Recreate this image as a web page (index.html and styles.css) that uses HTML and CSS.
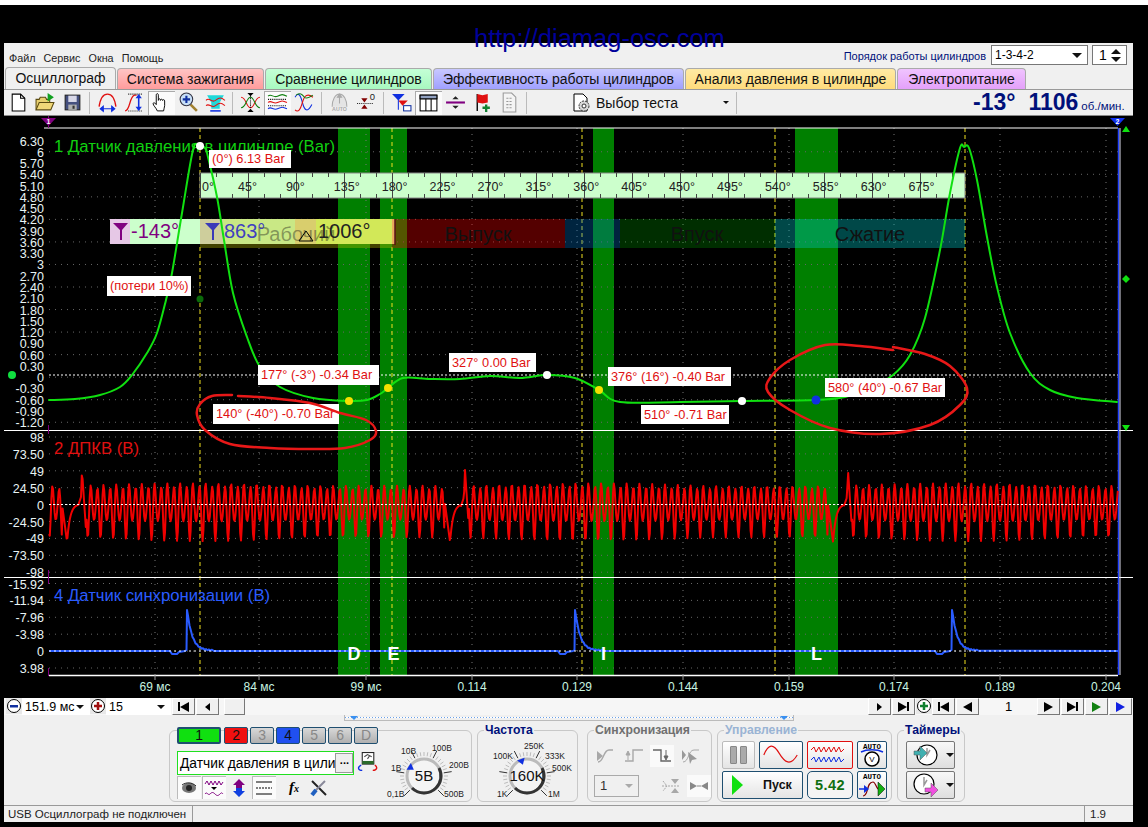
FILE: index.html
```html
<!DOCTYPE html>
<html lang="ru">
<head>
  <meta charset="UTF-8" />
  <title>Осциллограф</title>
  <link rel="stylesheet" href="styles.css">
</head>
<body>
  <div class="top-white"></div>
  <div class="site-url">http://diamag-osc.com</div>

  <div class="window">
    <div class="menu-row">
      <div class="menu">
        <span>Файл</span><span>Сервис</span><span>Окна</span><span>Помощь</span>
      </div>
      <div class="order">
        <span class="order-label">Порядок работы цилиндров</span>
        <div class="order-combo">1-3-4-2<i class="arrow-down"></i></div>
        <div class="order-spin">1<span class="spin-arrows"><i class="arrow-up"></i><i class="arrow-down"></i></span></div>
      </div>
    </div>

    <div class="tabs">
      <div class="tab tab-active">Осциллограф</div>
      <div class="tab tab-red">Система зажигания</div>
      <div class="tab tab-green">Сравнение цилиндров</div>
      <div class="tab tab-blue">Эффективность работы цилиндров</div>
      <div class="tab tab-yellow">Анализ давления в цилиндре</div>
      <div class="tab tab-purple">Электропитание</div>
    </div>

    <div class="toolbar">
      <button class="tb"><svg viewBox="0 0 20 20"><path d="M4 2h8l4 4v12H4z" fill="#fff" stroke="#000"/><path d="M12 2v4h4" fill="none" stroke="#000"/></svg></button>
      <button class="tb"><svg viewBox="0 0 20 20"><path d="M1 17V7h3l1-2h5l1 2h3v3" fill="#e8d070" stroke="#5a4a10"/><path d="M1 17l3-7h14l-3 7z" fill="#f0d878" stroke="#5a4a10"/><path d="M12 1l6 4-6 4z" fill="#10a020"/></svg></button>
      <button class="tb"><svg viewBox="0 0 20 20"><rect x="3" y="3" width="14" height="14" fill="#45507f" stroke="#222"/><rect x="6" y="3.500" width="8" height="6" fill="#d8d8e8"/><rect x="6" y="12" width="8" height="5" fill="#b0b0b0"/><rect x="10" y="13" width="2" height="3" fill="#333"/></svg></button>
      <i class="tb-sep"></i>
      <button class="tb"><svg viewBox="0 0 20 20"><path d="M2 14C3 7 6 2 10 2s7 5 8 12" fill="none" stroke="#e01010" stroke-width="1.300"/><path d="M3 16h14M3 16l3-2.500v5zM17 16l-3-2.500v5z" fill="#1030e0" stroke="#1030e0"/></svg></button>
      <button class="tb"><svg viewBox="0 0 20 20"><path d="M1 18c5 0 4-14 9-15h2" fill="none" stroke="#e01010" stroke-width="1.200"/><path d="M4 2h14M4 18h14" stroke="#222" stroke-dasharray="1 1"/><path d="M14 3v14" stroke="#1030e0" stroke-width="1.500"/><path d="M14 2l-3 4h6zM14 18l-3-4h6z" fill="#1030e0"/></svg></button>
      <button class="tb tb-on"><svg viewBox="0 0 20 20"><path d="M6 18c-1-3-4-5-4-7 0-1 2-1 3 1V3c0-2 2-2 2 0v5c0-2 2-2 2 0 0-1.500 2-1.500 2 0 0-1 2-1 2 .5V13c0 2-1 3-1 5z" fill="#fff" stroke="#000" stroke-width=".9"/></svg></button>
      <button class="tb"><svg viewBox="0 0 20 20"><path d="M12 12l6 6" stroke="#a08030" stroke-width="2.500"/><circle cx="8" cy="7" r="6" fill="#c8e0f8" stroke="#334"/><path d="M4.500 7h7M8 3.500v7" stroke="#1030a0" stroke-width="2"/></svg></button>
      <button class="tb"><svg viewBox="0 0 20 20"><path d="M2 3h16l-4 7v6H6v-6z" fill="#20d8d8"/><path d="M1 8c3-4 5 3 9 0s5-3 9 0M1 13c3-3 5 3 9 0s5-3 9 0" fill="none" stroke="#e01010"/><path d="M5 18h10" stroke="#1030e0" stroke-width="1.500"/></svg></button>
      <i class="tb-sep"></i>
      <button class="tb"><svg viewBox="0 0 20 20"><path d="M1 5c5 0 5 10 9 10s4-10 9-10" fill="none" stroke="#e01010"/><path d="M1 15c5 0 5-10 9-10s4 10 9 10" fill="none" stroke="#108010"/><path d="M10 4v12" stroke="#000" stroke-dasharray="1 1"/><path d="M7 1h6l-3 3zM7 19h6l-3-3z" fill="#000"/></svg></button>
      <button class="tb tb-on"><svg viewBox="0 0 20 20"><path d="M1 4c3-3 5 2 9 0s5-2 9 0" fill="none" stroke="#108010"/><path d="M1 10c3-3 5 2 9 0s5-2 9 0" fill="none" stroke="#e01010"/><path d="M1 16c3-3 5 2 9 0s5-2 9 0" fill="none" stroke="#1030e0"/><path d="M1 7h18M1 13h18" stroke="#000" stroke-dasharray="1 1"/></svg></button>
      <button class="tb"><svg viewBox="0 0 20 20"><path d="M1 5c3-5 5-3 7 5s5 10 9 2" fill="none" stroke="#1030e0"/><path d="M1 17c3 3 5 0 7-7s5-9 10-5" fill="none" stroke="#e01010"/><path d="M2 3c5-3 6 0 8 2s5 0 8-2" fill="none" stroke="#108010"/></svg></button>
      <i class="tb-sep"></i>
      <button class="tb"><svg viewBox="0 0 20 20"><path d="M3 14C3 7 6 2 10 2s7 5 7 12" fill="#e4e4e4" stroke="#aaa"/><path d="M10 3v8M8 5l2-3 2 3z" stroke="#aaa" fill="#aaa"/><text x="10" y="18.500" class="tb-auto">AUTO</text></svg></button>
      <button class="tb"><svg viewBox="0 0 20 20"><path d="M5 6h6l-3 4zM5 16h6l-3-4z" fill="#800000"/><path d="M1 11h15" stroke="#222" stroke-dasharray="1 1"/><text x="13" y="8" class="tb-zero">0</text></svg></button>
      <i class="tb-sep"></i>
      <button class="tb"><svg viewBox="0 0 20 20"><path d="M1 2h12l-6 6z" fill="#1030e0"/><path d="M7 8h9l-5 5z" fill="#e01010"/><path d="M7 3v14" stroke="#1030e0"/><rect x="12" y="13" width="7" height="5" fill="#fff" stroke="#1030a0"/></svg></button>
      <button class="tb tb-on"><svg viewBox="0 0 20 20"><rect x="2" y="3" width="16" height="15" fill="#fff" stroke="#000"/><path d="M2 6.500h16M7.500 3v15M12.500 3v15" stroke="#000"/><rect x="2" y="3" width="16" height="3.500" fill="#90a0c0" stroke="#000"/></svg></button>
      <button class="tb"><svg viewBox="0 0 20 20"><path d="M1 10h18" stroke="#800080" stroke-width="2"/><path d="M7 7h6l-3-3zM7 13h6l-3 3z" fill="#222"/></svg></button>
      <button class="tb"><svg viewBox="0 0 20 20"><path d="M5 2v16" stroke="#000" stroke-width="1.300"/><path d="M5 2l5 1 5-1v8l-5 1-5-1z" fill="#e01010"/><path d="M10 15h7M13.500 12v7" stroke="#108030" stroke-width="2.200"/></svg></button>
      <button class="tb"><svg viewBox="0 0 20 20"><path d="M4 1h8l4 4v14H4z" fill="#f4f4f4" stroke="#999"/><path d="M7 6h6M7 9h6M7 12h6M7 15h6" stroke="#999" stroke-dasharray="2 1"/></svg></button>
      <i class="tb-sep"></i>
      <div class="test-select">
        <svg viewBox="0 0 20 20"><path d="M3 1h9l4 4v13H3z" fill="#fff" stroke="#000"/><circle cx="13" cy="13" r="5" fill="#d8d8d8" stroke="#333" stroke-dasharray="2 1"/><circle cx="13" cy="13" r="2" fill="#fff" stroke="#333"/></svg>
        <span>Выбор теста</span>
        <i class="arrow-small"></i>
      </div>
      <i class="tb-sep tb-sep-test"></i>
      <div class="rpm">
        <span class="rpm-deg">-13°</span><span class="rpm-val">1106</span><span class="rpm-unit">об./мин.</span>
      </div>
    </div>

    <svg id="chart" class="chart" viewBox="4 116 1129 582"></svg>

    <div class="nav-row">
      <div class="nav-left">
        <button class="round-btn"><svg viewBox="0 0 16 16"><circle cx="8" cy="8" r="6.500" fill="#fff" stroke="#000"/><rect x="4" y="7" width="8" height="2.500" fill="#1030a0"/></svg></button>
        <div class="nav-combo nav-combo-time">151.9 мс<i class="arrow-down"></i></div>
        <button class="round-btn"><svg viewBox="0 0 16 16"><circle cx="8" cy="8" r="6.500" fill="#fff" stroke="#000"/><path d="M4 8h8M8 4v8" stroke="#a01010" stroke-width="2.500"/></svg></button>
        <div class="nav-combo nav-combo-step">15<i class="arrow-down"></i></div>
        <button class="step-btn"><i class="bar"></i><i class="tri-l"></i></button>
        <button class="step-btn"><i class="tri-l tri-small"></i></button>
        <button class="step-btn step-blank"></button>
      </div>
      <div class="nav-right">
        <button class="step-btn"><i class="tri-r tri-small"></i></button>
        <button class="step-btn"><i class="tri-r"></i><i class="bar"></i></button>
        <button class="round-btn"><svg viewBox="0 0 16 16"><circle cx="8" cy="8" r="6.500" fill="#fff" stroke="#000"/><path d="M4 8h8M8 4v8" stroke="#108030" stroke-width="2.500"/></svg></button>
        <button class="step-btn"><i class="bar"></i><i class="tri-l"></i></button>
        <button class="step-btn"><i class="tri-l"></i></button>
        <span class="page-num">1</span>
        <button class="step-btn"><i class="tri-r"></i></button>
        <button class="step-btn"><i class="tri-r"></i><i class="bar"></i></button>
        <button class="step-btn"><i class="tri-r tri-green"></i></button>
        <button class="step-btn"><i class="tri-r tri-blue"></i></button>
      </div>
    </div>

    <div class="panel">
      <div class="scroll-strip"><i class="scroll-mark"></i><i class="scroll-mark scroll-mark-r"></i></div>
      <div class="groups">

        <div class="group group-channels">
          <div class="chan-col">
            <div class="chan-row">
              <div class="chan chan-1">1</div>
              <div class="chan chan-2">2</div>
              <div class="chan chan-off">3</div>
              <div class="chan chan-4">4</div>
              <div class="chan chan-off">5</div>
              <div class="chan chan-off">6</div>
              <div class="chan chan-off">D</div>
            </div>
            <div class="sensor-row">
              <div class="sensor">
                <span class="sensor-name">Датчик давления в цили</span>
                <span class="sensor-more">...</span>
              </div>
              <svg class="sensor-ic" viewBox="0 0 20 20"><rect x="5" y="1" width="11" height="11" fill="#fff" stroke="#222"/><path d="M7 5l3-2 4 2M10 7l2-3" stroke="#444" fill="none"/><rect x="5" y="9" width="11" height="3" fill="#2a6a2a"/><path d="M4 13c-4 2-3 5 1 5" fill="none" stroke="#1030e0" stroke-width="1.300"/><path d="M17 13c3 2 2 5-2 5" fill="none" stroke="#e01010" stroke-width="1.300"/></svg>
            </div>
            <div class="tool-row">
              <button class="tool tool-on"><svg viewBox="0 0 20 20"><ellipse cx="10" cy="10" rx="7" ry="5" fill="#777"/><circle cx="10" cy="10" r="3" fill="#222"/><path d="M3 7c4-3 10-3 14 1" stroke="#222" fill="none"/></svg></button>
              <button class="tool tool-on"><svg viewBox="0 0 20 20"><path d="M1 6l2-3 2 4 2-4 2 4 2-4 2 4 2-4 2 4 2-3" fill="none" stroke="#800080"/><path d="M1 16c2-3 3 2 5 0s3-2 5 0 3 2 5 0 2-1 3 0" fill="none" stroke="#800080"/><path d="M7 9h6l-3 3z" fill="#000"/></svg></button>
              <button class="tool"><svg viewBox="0 0 20 20"><path d="M10 1l6 6h-3v3H7V7H4z" fill="#800080"/><path d="M10 19l6-6h-3v-3H7v3H4z" fill="#1040e0"/></svg></button>
              <button class="tool tool-on"><svg viewBox="0 0 20 20"><path d="M2 4h16M2 16h16" stroke="#000"/><path d="M2 10h16" stroke="#000" stroke-dasharray="2 1"/></svg></button>
              <span class="fx">f<small>x</small></span>
              <button class="tool"><svg viewBox="0 0 20 20"><path d="M3 3l14 14" stroke="#222" stroke-width="2"/><path d="M16 3L6 13" stroke="#889" stroke-width="2"/><path d="M7 12l-4 5" stroke="#2060c0" stroke-width="4"/></svg></button>
            </div>
          </div>
          <svg class="knob knob-volt" data-value="5В" data-pointer="-58" viewBox="0 0 92 72">
            <text x="7" y="66" class="knob-label">0,1В</text>
            <text x="11" y="40" class="knob-label">1В</text>
            <text x="21" y="23" class="knob-label">10В</text>
            <text x="52" y="20" class="knob-label">100В</text>
            <text x="69" y="37" class="knob-label">200В</text>
            <text x="64" y="66" class="knob-label">500В</text>
          </svg>
        </div>

        <div class="group group-freq">
          <div class="group-title title-navy">Частота</div>
          <svg class="knob knob-freq" data-value="160K" data-pointer="-20" viewBox="0 0 92 72">
            <text x="10" y="28" class="knob-label">100K</text>
            <text x="41" y="18" class="knob-label">250K</text>
            <text x="62" y="28" class="knob-label">333K</text>
            <text x="69" y="40" class="knob-label">500K</text>
            <text x="14" y="66" class="knob-label">1K</text>
            <text x="65" y="66" class="knob-label">1M</text>
          </svg>
        </div>

        <div class="group group-sync">
          <div class="group-title title-grey">Синхронизация</div>
          <div class="sync-row">
            <button class="tool tool-plain"><svg viewBox="0 0 20 20"><path d="M2 16c6 0 5-12 11-12h4" fill="none" stroke="#a8a8a8" stroke-width="1.400"/><path d="M1 5l6 5-6 5z" fill="#a8a8a8"/></svg></button>
            <button class="tool tool-plain"><svg viewBox="0 0 20 20"><path d="M1 15h8V4h10" fill="none" stroke="#a8a8a8" stroke-width="1.400"/><path d="M4 6v8M2 9l2-4 2 4z" stroke="#a8a8a8" fill="#a8a8a8"/></svg></button>
            <button class="tool tool-dither"><svg viewBox="0 0 20 20"><path d="M1 4h8v11h10" fill="none" stroke="#666" stroke-width="1.400"/><path d="M14 4v8M12 10l2 4 2-4z" stroke="#666" fill="#666"/></svg></button>
            <button class="tool tool-plain"><svg viewBox="0 0 20 20"><path d="M3 16C9 16 8 4 14 4h5" fill="none" stroke="#a8a8a8"/><path d="M2 4l4 5-4 5zM8 6l9 7-5 1-2 4z" fill="#999"/></svg></button>
          </div>
          <div class="sync-row">
            <div class="sync-combo">1<i class="arrow-grey"></i></div>
            <button class="tool tool-plain"><svg viewBox="0 0 20 20"><path d="M10 3h8l-4 5zM10 17h8l-4-5z" fill="#a8a8a8"/><path d="M1 10h18M2 5l4 5-4 5" fill="none" stroke="#a8a8a8" stroke-dasharray="2 1"/></svg></button>
            <button class="tool tool-dither"><svg viewBox="0 0 20 20"><path d="M1 6l7 4-7 4zM19 6l-7 4 7 4z" fill="#888"/><path d="M8 10h4" stroke="#888"/></svg></button>
          </div>
        </div>

        <div class="group group-control">
          <div class="group-title title-pale">Управление</div>
          <div class="control-grid">
            <button class="ctl ctl-pause"><i></i><i></i></button>
            <button class="ctl ctl-sine"><svg viewBox="0 0 44 24"><path d="M4 12C9 0 14 0 20 10s12 14 19 2" fill="none" stroke="#e01010" stroke-width="1.200"/></svg></button>
            <button class="ctl ctl-wave"><svg viewBox="0 0 44 24"><path d="M3 7l3-3 2 5 3-5 2 5 3-5 2 5 3-5 2 5 3-5 2 5 3-5 2 5 3-3" fill="none" stroke="#e01010"/><path d="M3 17l3-3 2 5 3-5 2 5 3-5 2 5 3-5 2 5 3-5 2 5 3-5 2 5 3-3" fill="none" stroke="#1030e0"/></svg></button>
            <button class="ctl ctl-auto"><svg viewBox="0 0 28 26"><text x="14" y="7" class="ctl-auto-text">AUTO</text><path d="M3 10c6-3 16-3 22 0" fill="none" stroke="#1030e0" stroke-width="1.500"/><circle cx="14" cy="17" r="7" fill="#fff" stroke="#000" stroke-width="1.500"/><text x="14" y="20" class="ctl-v">V</text></svg></button>
            <button class="ctl ctl-start"><i class="start-tri"></i><span>Пуск</span></button>
            <button class="ctl ctl-value">5.42</button>
            <button class="ctl ctl-auto"><svg viewBox="0 0 28 26"><text x="14" y="7" class="ctl-auto-text">AUTO</text><path d="M5 24c6 0 3-14 10-14 3 0 3 8 7 8" fill="none" stroke="#800000" stroke-width="1.200"/><path d="M1 17h7" stroke="#1030e0" stroke-width="1.500"/><path d="M6 13l5 4-5 4z" fill="#1030e0"/><path d="M20 10l7 7-7 7z" fill="#10b010" stroke="#000" stroke-width=".5"/></svg></button>
          </div>
        </div>

        <div class="group group-timers">
          <div class="group-title title-navy">Таймеры</div>
          <button class="timer"><svg viewBox="0 0 26 24"><circle cx="14" cy="12" r="10" fill="#fff" stroke="#000" stroke-width="1.200"/><path d="M14 5v7l3-5" stroke="#999" fill="none" stroke-width="1.500"/><path d="M1 8h6V3l7 7-7 7v-5H1z" fill="#40b0b0" stroke="#555" stroke-width=".5"/></svg><i class="arrow-down"></i></button>
          <button class="timer"><svg viewBox="0 0 26 24"><circle cx="11" cy="11" r="10" fill="#fff" stroke="#000" stroke-width="1.200"/><path d="M11 4v8l3-5" stroke="#999" fill="none" stroke-width="1.500"/><path d="M12 15h6v-5l7 7-7 7v-5h-6z" fill="#f050e0" stroke="#555" stroke-width=".5"/></svg><i class="arrow-down"></i></button>
        </div>

      </div>
    </div>

    <div class="status">
      <div class="status-a">USB Осциллограф не подключен</div>
      <div class="status-b"></div>
      <div class="status-c">1.9</div>
    </div>
  </div>

  <script src="script.js"></script>
</body>
</html>
```

FILE: styles.css
```css
html, body {
  margin: 0;
  padding: 0;
}
body {
  background: #000;
  font-family: "Liberation Sans", Arial, sans-serif;
  width: 1148px;
  height: 827px;
  overflow: hidden;
  position: relative;
}
button {
  font-family: inherit;
  padding: 0;
}
i {
  display: block;
}
.top-white {
  height: 5px;
  background: #fff;
}
.site-url {
  position: absolute;
  left: 474px;
  top: 24px;
  font-size: 25.5px;
  line-height: 28px;
  color: #00009a;
  z-index: 2;
}
.window {
  margin: 38px 0 0 4px;
  width: 1129px;
  height: 779px;
  background: #f0f0f0;
  display: flex;
  flex-direction: column;
}

/* menu */
.menu-row {
  height: 25px;
  display: flex;
  justify-content: space-between;
}
.menu {
  display: flex;
  gap: 8px;
  padding: 9px 0 0 5px;
  font-size: 10.8px;
  color: #222;
}
.order {
  display: flex;
  align-items: flex-start;
  padding: 2px 6px 0 0;
}
.order-label {
  font-size: 11px;
  color: #00107a;
  margin: 5px 5px 0 0;
}
.order-combo {
  width: 97px;
  height: 20px;
  box-sizing: border-box;
  border: 1px solid #777;
  background: #fff;
  font-size: 12px;
  padding: 0 5px 0 3px;
  line-height: 17px;
  display: flex;
  justify-content: space-between;
  align-items: center;
  margin-right: 4px;
}
.order-spin {
  width: 35px;
  height: 20px;
  box-sizing: border-box;
  border: 1px solid #777;
  background: #fff;
  font-size: 14px;
  padding: 0 5px 0 6px;
  line-height: 18px;
  display: flex;
  justify-content: space-between;
}
.spin-arrows {
  display: flex;
  flex-direction: column;
  justify-content: center;
  gap: 3px;
}
.arrow-down {
  width: 0;
  height: 0;
  border-left: 5px solid transparent;
  border-right: 5px solid transparent;
  border-top: 5px solid #111;
}
.arrow-up {
  width: 0;
  height: 0;
  border-left: 5px solid transparent;
  border-right: 5px solid transparent;
  border-bottom: 5px solid #111;
}

/* tabs */
.tabs {
  height: 22px;
  display: flex;
  gap: 1px;
  padding-left: 1px;
  box-sizing: border-box;
  border-bottom: 1px solid #999;
}
.tab {
  height: 21px;
  box-sizing: border-box;
  border: 1px solid #aaa;
  border-bottom: 0;
  border-radius: 4px 4px 0 0;
  font-size: 14px;
  line-height: 21px;
  text-align: center;
  color: #111;
}
.tab-active {
  width: 111px;
  height: 22px;
  background: #f0f0f0;
  position: relative;
  top: -1px;
}
.tab-red {
  width: 147px;
  background: linear-gradient(#ffc4c4, #ff9c9c);
}
.tab-green {
  width: 167px;
  background: linear-gradient(#c4ffd6, #a8f8c0);
}
.tab-blue {
  width: 251px;
  background: linear-gradient(#c8c8ff, #a0a0ff);
}
.tab-yellow {
  width: 211px;
  background: linear-gradient(#ffeaa4, #ffdc7c);
}
.tab-purple {
  width: 129px;
  background: linear-gradient(#f0c4ff, #e4a0fa);
}

/* toolbar */
.toolbar {
  height: 26px;
  box-sizing: border-box;
  display: flex;
  align-items: center;
  padding-left: 1px;
  border-bottom: 1px solid #888;
}
.tb {
  width: 27px;
  height: 24px;
  border: 0;
  background: none;
  display: flex;
  align-items: center;
  justify-content: center;
  flex: none;
}
.tb svg {
  width: 21px;
  height: 21px;
}
.tb-on {
  background: #fbfbfb;
  box-shadow: inset 1px 1px 0 #aaa;
}
.tb-sep {
  width: 1px;
  height: 22px;
  margin: 0 4px 0 3px;
  background: #bbb;
  flex: none;
}
.tb-auto {
  font-size: 5px;
  font-weight: bold;
  text-anchor: middle;
  fill: #aaa;
}
.tb-zero {
  font-size: 9px;
  fill: #222;
}
.test-select {
  display: flex;
  align-items: center;
  width: 165px;
  margin-left: 40px;
  font-size: 14px;
  color: #111;
  flex: none;
}
.test-select svg {
  width: 20px;
  height: 20px;
  margin-right: 5px;
}
.arrow-small {
  width: 0;
  height: 0;
  margin-left: 45px;
  border-left: 3px solid transparent;
  border-right: 3px solid transparent;
  border-top: 3px solid #111;
}
.tb-sep-test {
  margin-left: 0;
}
.rpm {
  margin-left: 232px;
  display: flex;
  align-items: baseline;
  color: #00107a;
  font-weight: bold;
  white-space: nowrap;
  font-size: 23px;
}
.rpm-val {
  margin-left: 13px;
}
.rpm-unit {
  font-size: 11.5px;
  font-weight: normal;
  margin-left: 3px;
}

/* chart */
.chart {
  display: block;
  width: 1129px;
  height: 582px;
  background: #000;
  flex: none;
}
.axis-txt {
  font-size: 12.5px;
  fill: #e8f4f4;
  text-anchor: end;
}
.time-txt {
  font-size: 12px;
  fill: #c8f4e0;
  text-anchor: middle;
}
.chan-txt {
  font-size: 16.7px;
}
.ruler-txt {
  font-size: 12.5px;
  fill: #222;
}
.phase-txt {
  font-size: 20px;
  fill: #111;
  text-anchor: middle;
}
.measure-txt {
  font-size: 20px;
}
.val-txt {
  font-size: 12.8px;
  fill: #e01010;
}
.band-txt {
  font-size: 18px;
  font-weight: bold;
  fill: #fff;
  text-anchor: middle;
}
.mark-txt {
  font-size: 7px;
  font-weight: bold;
  fill: #fff;
  text-anchor: middle;
}

/* nav row */
.nav-row {
  height: 17px;
  display: flex;
  justify-content: space-between;
  background: #f6f6f6;
  flex: none;
}
.nav-left, .nav-right {
  display: flex;
  align-items: flex-start;
}
.nav-left {
  padding-left: 2px;
}
.round-btn {
  width: 16px;
  height: 16px;
  border: 0;
  background: #e8e8e8;
  flex: none;
}
.round-btn svg {
  display: block;
  width: 16px;
  height: 16px;
}
.nav-combo {
  height: 17px;
  background: #fff;
  font-size: 12.5px;
  line-height: 16px;
  padding: 0 6px 0 3px;
  box-sizing: border-box;
  display: flex;
  justify-content: space-between;
  align-items: center;
  white-space: nowrap;
}
.nav-combo .arrow-down {
  border-left-width: 4px;
  border-right-width: 4px;
  border-top-width: 4px;
  flex: none;
}
.nav-combo-time {
  width: 68px;
}
.nav-combo-step {
  width: 65px;
  margin-right: 1px;
}
.step-btn {
  width: 23px;
  height: 17px;
  background: #f0f0f0;
  border: 1px solid #fff;
  border-right-color: #777;
  border-bottom-color: #777;
  display: flex;
  align-items: center;
  justify-content: center;
  margin-right: 1px;
  flex: none;
}
.step-blank {
  margin-left: 4px;
  width: 21px;
}
.bar {
  width: 2px;
  height: 9px;
  background: #000;
}
.tri-l {
  width: 0;
  height: 0;
  border-top: 5px solid transparent;
  border-bottom: 5px solid transparent;
  border-right: 9px solid #000;
}
.tri-r {
  width: 0;
  height: 0;
  border-top: 5px solid transparent;
  border-bottom: 5px solid transparent;
  border-left: 9px solid #000;
}
.tri-small {
  border-top-width: 4px;
  border-bottom-width: 4px;
  border-right-width: 5px;
  border-left-width: 5px;
}
.tri-l.tri-small {
  border-left-width: 0;
}
.tri-r.tri-small {
  border-right-width: 0;
}
.tri-green {
  border-left-color: #108010;
}
.tri-blue {
  border-left-color: #1020e0;
}
.page-num {
  width: 57px;
  text-align: center;
  font-size: 13px;
  line-height: 17px;
}

/* control panel */
.panel {
  flex: none;
  height: 90px;
  position: relative;
  border-bottom: 0;
}
.scroll-strip {
  position: absolute;
  left: 340px;
  top: 0;
  width: 448px;
  height: 5px;
  border: 1px solid #bbb;
  border-top: 0;
  background: repeating-linear-gradient(90deg, #6aa0e8 0 1px, #fff 1px 3px);
  background-size: 100% 1px;
  background-position: 0 2px;
  background-repeat: no-repeat;
}
.scroll-mark {
  position: absolute;
  left: 5px;
  top: 1px;
  width: 0;
  height: 0;
  border-left: 4px solid transparent;
  border-right: 4px solid transparent;
  border-top: 4px solid #3a90f0;
}
.scroll-mark-r {
  left: auto;
  right: 5px;
}
.groups {
  display: flex;
  align-items: flex-start;
  padding: 15px 0 0 165px;
}
.group {
  box-sizing: border-box;
  height: 72px;
  border: 1px solid #c8c8c8;
  border-radius: 6px;
  position: relative;
  flex: none;
}
.group-title {
  position: absolute;
  left: 6px;
  top: -7px;
  padding: 0 1px;
  background: #f0f0f0;
  font-size: 12.2px;
  font-weight: bold;
  line-height: 13px;
}
.title-navy {
  color: #00107a;
}
.title-grey {
  color: #707070;
}
.title-pale {
  color: #9ab4d4;
}
.group-channels {
  width: 303px;
  margin-right: 5px;
  display: flex;
  padding-left: 7px;
}
.chan-col {
  width: 201px;
  margin-top: -4px;
  flex: none;
}
.chan-row {
  display: flex;
  gap: 2px;
  height: 17px;
}
.chan {
  width: 25px;
  box-sizing: border-box;
  border: 1px solid #1f4f70;
  border-radius: 2px;
  font-size: 14px;
  line-height: 15px;
  text-align: center;
  color: #111;
}
.chan-1 {
  width: 46px;
  background: #10e010;
  border-width: 2px;
  line-height: 13px;
  margin-right: 1px;
}
.chan-2 {
  background: #f01010;
}
.chan-4 {
  background: #2050f0;
}
.chan-off {
  background: linear-gradient(#d8d8d8, #b0b0b0);
  color: #888;
}
.sensor-row {
  display: flex;
  align-items: flex-start;
  margin-top: 7px;
}
.sensor {
  width: 177px;
  height: 24px;
  box-sizing: border-box;
  border: 1px solid #20e020;
  background: #fff;
  display: flex;
  align-items: center;
  justify-content: space-between;
  padding: 0 1px 0 2px;
}
.sensor-name {
  font-size: 13.8px;
  white-space: nowrap;
}
.sensor-more {
  width: 18px;
  height: 20px;
  background: #eee;
  border: 1px solid #999;
  box-sizing: border-box;
  font-size: 11px;
  font-weight: bold;
  line-height: 13px;
  text-align: center;
  flex: none;
}
.sensor-ic {
  width: 22px;
  height: 22px;
  margin-left: 3px;
}
.tool-row {
  display: flex;
  align-items: center;
  gap: 1px;
  margin-top: 1px;
}
.tool {
  width: 24px;
  height: 23px;
  border: 0;
  background: none;
  display: flex;
  align-items: center;
  justify-content: center;
  flex: none;
}
.tool svg {
  width: 20px;
  height: 20px;
}
.tool-on {
  background: #fbfbfb;
  box-shadow: inset 1px 1px 0 #bbb;
}
.fx {
  width: 24px;
  margin-left: 5px;
  text-align: center;
  font-family: "Liberation Serif", serif;
  font-style: italic;
  font-weight: bold;
  font-size: 15px;
}
.fx small {
  font-size: 10px;
}
.knob {
  width: 92px;
  height: 72px;
  flex: none;
  overflow: visible;
}
.knob-volt {
  margin-left: 2px;
}
.knob-label {
  font-size: 8.5px;
  fill: #222;
}
.knob-val {
  font-size: 15px;
  fill: #111;
  text-anchor: middle;
}
.group-freq {
  width: 101px;
  margin-right: 9px;
}
.group-freq .knob {
  display: block;
  margin-left: 5px;
}
.group-sync {
  width: 125px;
  margin-right: 5px;
  padding: 12px 0 0 6px;
}
.sync-row {
  display: flex;
  align-items: center;
  gap: 4px;
  height: 26px;
  margin-bottom: 4px;
}
.tool-plain, .tool-dither {
  width: 24px;
  height: 22px;
}
.tool-dither {
  background: #fafafa;
}
.sync-combo {
  width: 47px;
  height: 22px;
  box-sizing: border-box;
  border: 1px solid #aaa;
  background: #f0f0f0;
  margin-right: 16px;
  padding: 0 5px;
  font-size: 13px;
  line-height: 20px;
  color: #333;
  display: flex;
  justify-content: space-between;
  align-items: center;
}
.arrow-grey {
  width: 0;
  height: 0;
  border-left: 4px solid transparent;
  border-right: 4px solid transparent;
  border-top: 4px solid #aaa;
}
.group-control {
  width: 175px;
  margin-right: 5px;
  padding: 10px 0 0 4px;
}
.control-grid {
  display: grid;
  grid-template-columns: 33px 44px 46px 30px;
  grid-template-rows: 28px 28px;
  gap: 2px 4px;
}
.ctl {
  border: 1px solid #1f4f70;
  border-radius: 2px;
  background: linear-gradient(#fff, #e4e4e4);
  display: flex;
  align-items: center;
  justify-content: center;
}
.ctl svg {
  width: 100%;
  height: 100%;
}
.ctl-pause {
  border-color: #bbb;
  gap: 3px;
}
.ctl-pause i {
  width: 5px;
  height: 16px;
  background: #aaa;
  border: 1px solid #888;
  border-radius: 1px;
}
.ctl-wave {
  border-color: #e01010;
}
.ctl-auto-text {
  font-family: "Liberation Mono", monospace;
  font-size: 7.5px;
  font-weight: bold;
  text-anchor: middle;
}
.ctl-v {
  font-size: 8px;
  text-anchor: middle;
}
.ctl-start {
  grid-column: 1 / span 2;
  justify-content: flex-start;
  padding-left: 9px;
  font-size: 12.5px;
  font-weight: bold;
  color: #111;
}
.ctl-start span {
  margin-left: 20px;
}
.start-tri {
  width: 0;
  height: 0;
  border-top: 10px solid transparent;
  border-bottom: 10px solid transparent;
  border-left: 11px solid #10e010;
}
.ctl-value {
  border-radius: 5px;
  background: #f4f4f4;
  color: #107010;
  font-size: 14.5px;
  font-weight: bold;
  letter-spacing: .5px;
}
.group-timers {
  width: 68px;
  padding: 10px 0 0 8px;
}
.timer {
  width: 49px;
  height: 28px;
  margin-bottom: 2px;
  border: 1px solid #777;
  border-radius: 2px;
  background: linear-gradient(#f8f8f8, #dedede);
  display: flex;
  align-items: center;
  justify-content: flex-start;
  padding-left: 6px;
  gap: 7px;
}
.timer svg {
  width: 26px;
  height: 24px;
}
.timer .arrow-down {
  border-left-width: 4px;
  border-right-width: 4px;
  border-top-width: 4px;
}

/* status */
.status {
  height: 17px;
  display: flex;
  border-top: 1px solid #999;
  box-sizing: border-box;
  font-size: 11.5px;
  line-height: 16px;
  color: #222;
  flex: none;
}
.status-a {
  width: 189px;
  padding-left: 4px;
  box-sizing: border-box;
  border-right: 1px solid #999;
}
.status-b {
  width: 891px;
  border-right: 1px solid #999;
}
.status-c {
  padding-left: 5px;
}
```

FILE: script.js
```js
const chart = document.getElementById('chart');
const PLOT_L = 49, PLOT_R = 1118;
let out = '';

function text(x, y, cls, str, extra = '') {
  out += `<text x="${x}" y="${y}" class="${cls}" ${extra}>${str}</text>`;
}
function rect(x, y, w, h, fill, extra = '') {
  out += `<rect x="${x}" y="${y}" width="${w}" height="${h}" fill="${fill}" ${extra}/>`;
}
function line(x1, y1, x2, y2, stroke, extra = '') {
  out += `<line x1="${x1}" y1="${y1}" x2="${x2}" y2="${y2}" stroke="${stroke}" ${extra}/>`;
}
function dot(x, y, r, fill) {
  out += `<circle cx="${x}" cy="${y}" r="${r}" fill="${fill}"/>`;
}
function poly(points, stroke, width) {
  const d = points.map(p => p[0].toFixed(1) + ',' + p[1].toFixed(1)).join(' ');
  out += `<polyline points="${d}" fill="none" stroke="${stroke}" stroke-width="${width}" stroke-linejoin="round"/>`;
}
// smooth line through the given points
function smooth(pts, stroke, width) {
  let d = `M${pts[0][0]} ${pts[0][1]}`;
  for (let i = 0; i < pts.length - 1; i++) {
    const p0 = pts[i - 1] || pts[i], p1 = pts[i], p2 = pts[i + 1], p3 = pts[i + 2] || p2;
    const c1x = p1[0] + (p2[0] - p0[0]) / 6, c1y = p1[1] + (p2[1] - p0[1]) / 6;
    const c2x = p2[0] - (p3[0] - p1[0]) / 6, c2y = p2[1] - (p3[1] - p1[1]) / 6;
    d += `C${c1x} ${c1y} ${c2x} ${c2y} ${p2[0]} ${p2[1]}`;
  }
  out += `<path d="${d}" fill="none" stroke="${stroke}" stroke-width="${width}" stroke-linecap="round"/>`;
}

// green bands
const bands = [[338, 32, 'D'], [380, 27, 'E'], [593, 21, 'I'], [795, 43, 'L']];
bands.forEach(b => rect(b[0], 128, b[1], 547, '#007f00'));

// grid
const timeX = [155, 259, 366, 472, 577, 683, 789, 894, 1000, 1106];
timeX.forEach(x => line(x, 128, x, 675, '#777', 'stroke-dasharray="1 5"'));
const axis1 = ['6.30','6','5.70','5.40','5.10','4.80','4.50','4.20','3.90','3.60','3.30','3','2.70','2.40','2.10','1.80','1.50','1.20','0.90','0.60','0.30','0','-0.30','-0.60','-0.90','-1.20'];
axis1.forEach((t, i) => {
  const y = 140.500 + i * 11.27;
  text(44, y + 5, 'axis-txt', t);
  if (i % 2 === 1) line(PLOT_L, y, PLOT_R, y, '#666', 'stroke-dasharray="1 5"');
});
const axis2 = ['98','73.50','49','24.50','0','-24.50','-49','-73.50','-98'];
axis2.forEach((t, i) => {
  const y = 437 + i * 16.9;
  text(44, y + 5, 'axis-txt', t);
  line(PLOT_L, y, PLOT_R, y, '#666', 'stroke-dasharray="1 5"');
});
const axis3 = ['-15.92','-11.94','-7.96','-3.98','0','3.98'];
axis3.forEach((t, i) => {
  const y = 583.500 + i * 16.9;
  text(44, y + 5, 'axis-txt', t);
  line(PLOT_L, y, PLOT_R, y, '#666', 'stroke-dasharray="1 5"');
});

// yellow cylinder marks
[200, 392, 582, 775, 965].forEach(x => line(x, 128, x, 675, '#f0e020', 'stroke-dasharray="4 3"'));

// zero lines under the traces
line(PLOT_L, 375, PLOT_R, 375, '#fff', 'stroke-dasharray="2 2"');

// frame
line(PLOT_L - 5, 128, PLOT_R, 128, '#fff');
line(4, 430.500, 1133, 430.500, '#fff');
line(4, 577.500, 1133, 577.500, '#fff');
line(PLOT_L, 675.500, PLOT_R, 675.500, '#fff', 'stroke-width="1.500"');
line(PLOT_R + .5, 128, PLOT_R + .5, 675, '#2040ff', 'stroke-width="1.500"');
line(PLOT_R + 2, 128, PLOT_R + 2, 675, '#dde');
line(PLOT_L - .5, 116, PLOT_L - .5, 128, '#800080');
line(PLOT_L - .5, 425, PLOT_L - .5, 434, '#800080');
line(PLOT_L - .5, 570, PLOT_L - .5, 584, '#800080');
line(PLOT_L - .5, 668, PLOT_L - .5, 676, '#800080');

// ruler
rect(200, 173, 765, 25, '#ccffcc', 'stroke="#888"');
for (let x = 200; x < 965; x += 16) {
  line(x + .5, 173, x + .5, (x - 200) % 48 === 0 ? 198 : 177, '#444');
  line(x + .5, 198, x + .5, 194, '#444');
}
for (let i = 0; i < 16; i++) text(i === 0 ? 202 : 238 + (i - 1) * 47.9, 191, 'ruler-txt', (i * 45) + '°');

// measures box
rect(110, 219, 285, 25, '#ccffcc');
rect(110, 219, 20, 25, '#e6c8e6');
rect(200, 219, 23, 25, '#d8d8f0');
rect(295, 219, 21, 25, '#e8d8a8');
rect(223, 219, 72, 25, '#d0ffcc');
rect(316, 219, 78, 25, '#ddff88');

// phases, laid over the measures box
rect(200, 219, 192, 29, 'rgba(190,190,0,.35)');
rect(392, 219, 173, 29, 'rgba(255,0,0,.33)');
rect(565, 219, 55, 29, 'rgba(0,120,210,.3)');
rect(620, 219, 155, 29, 'rgba(0,255,0,.18)');
rect(775, 219, 190, 29, 'rgba(0,200,200,.36)');
line(395, 219, 395, 245, '#5a1010', 'stroke-width="1.500"');
text(296, 241, 'phase-txt', 'Рабочий', 'fill-opacity=".4"');
text(478, 241, 'phase-txt', 'Выпуск');
text(697, 241, 'phase-txt', 'Впуск');
text(870, 241, 'phase-txt', 'Сжатие');

// measure values, on top of the phases
out += '<path d="M113 223h15l-6 7v10h-2v-10z" fill="#800080"/>';
text(131, 238, 'measure-txt', '-143°', 'fill="#800080"');
out += '<path d="M205 223h15l-6 7v10h-2v-10z" fill="#3a3ab8"/>';
text(224, 238, 'measure-txt', '863°', 'fill="#4040c0"');
out += '<path d="M306 231l7 10h-14z" fill="none" stroke="#000"/>';
text(318, 238, 'measure-txt', '1006°', 'fill="#222"');

// channel titles
text(54, 152, 'chan-txt', '1 Датчик давления в цилиндре (Bar)', 'fill="#10d010"');
text(54, 454, 'chan-txt', '2 ДПКВ (В)', 'fill="#e01010"');
text(54, 601, 'chan-txt', '4 Датчик синхронизации (В)', 'fill="#2a5cff"');

// pressure trace
smooth([[49,400],[75,399],[100,395],[120,387],[132,375],[147,353],[157,333],[166,300],[172,273],[182,213],[193,150],[199,146],[205,148],[208,157],[217,197],[224,240],[233,293],[247,337],[260,367],[280,387],[313,398],[349,401],[367,400],[380,394],[388,388],[403,378],[430,379],[460,379],[490,376],[520,378],[547,375],[575,378],[599,390],[620,402],[680,402],[742,401],[816,400],[845,397],[870,388],[893,375],[910,355],[925,318],[940,250],[950,193],[960,148],[964,147],[969,148],[977,180],[987,237],[997,287],[1010,333],[1030,373],[1050,390],[1077,398],[1117,402]], '#10e010', 2);

// crank sensor trace: 60-2 teeth per turn, so one tooth is 6.38 px
const syncs = [82, 465, 848];
const redPts = [];
for (let x = PLOT_L; x <= PLOT_R; x += .8) {
  let near = null;
  syncs.forEach(s => { if (x - s > -20 && x - s <= 4) near = x - s; });
  let y;
  if (near !== null) {
    if (near < -15) y = 504 + (near + 20) * 7.500;
    else if (near < -4) y = 504 + 39 * Math.exp((-15 - near) / 3);
    else if (near < -1) y = 506 - (near + 4) * 3;
    else if (near < 0) y = 497 - (near + 1) * 27;
    else y = 470 + near * 15;
  } else {
    const d = ((x - syncs[0]) % 383 + 383) % 383;
    const env = 1 + .12 * Math.sin(Math.PI * Math.min(d, 240) / 240);
    const t = 2 * Math.PI * x / 6.38;
    const v = Math.sin(t) * (.72 + .3 * Math.cos(t / 2 + .6));
    y = 507 - v * (v > 0 ? 27 : 30) * env;
  }
  redPts.push([x, y]);
}
poly(redPts, '#f00000', 2);
line(PLOT_L, 504.500, PLOT_R, 504.500, '#fff', 'stroke-dasharray="2 2"');

// sync trace
const bluePts = [];
[187, 575, 952].reduce((from, s) => {
  bluePts.push([from, 651], [s - 17, 651], [s - 15, 654], [s - 10, 654], [s - 8, 652], [s - 2, 651], [s - .5, 650], [s, 610]);
  for (let x = s + 1; x < s + 27; x += 1.500) {
    bluePts.push([x, 651 - 42 * Math.exp(-(x - s) / 5) + (x % 3 < 1.500 ? 0 : -1)]);
  }
  return s + 27;
}, PLOT_L);
bluePts.push([PLOT_R, 651]);
poly(bluePts, '#2a5cff', 2);
line(PLOT_L, 651, PLOT_R, 651, '#fff', 'stroke-dasharray="2 3"');

bands.forEach(b => text(b[0] + b[1] / 2, 660, 'band-txt', b[2]));

// time axis
['69 мс','84 мс','99 мс','0.114','0.129','0.144','0.159','0.174','0.189','0.204'].forEach((t, i) => {
  text(timeX[i], 691, 'time-txt', t);
  line(timeX[i], 675, timeX[i], 680, '#999');
});

// dots on the pressure trace
dot(200, 146, 4, '#fff');
dot(547, 375, 4, '#fff');
dot(742, 401, 4, '#fff');
dot(349, 401, 4, '#f4e000');
dot(388, 388, 4, '#f4e000');
dot(599, 390, 4, '#f4e000');
dot(816, 400, 4.500, '#1030e0');
dot(200, 299, 3.500, '#0a6a0a');
dot(12, 375, 4, '#10e040');

// value labels
const labels = [
  [209, 150, 82, 18, '(0°) 6.13 Bar'],
  [107, 276, 84, 20, '(потери 10%)'],
  [258, 365, 121, 20, '177° (-3°) -0.34 Bar'],
  [213, 404, 126, 20, '140° (-40°) -0.70 Bar'],
  [449, 353, 87, 19, '327° 0.00 Bar'],
  [608, 367, 123, 19, '376° (16°) -0.40 Bar'],
  [641, 405, 88, 19, '510° -0.71 Bar'],
  [825, 378, 120, 19, '580° (40°) -0.67 Bar']
];
labels.forEach(l => {
  rect(l[0], l[1], l[2], l[3], '#fff');
  text(l[0] + 3, l[1] + l[3] / 2 + 4, 'val-txt', l[4]);
});

// hand-drawn circles
smooth([[232,395],[212,396],[200,404],[197,415],[205,430],[230,444],[270,448],[310,449],[345,448],[370,440],[376,431],[366,420],[340,413],[310,403],[270,398],[238,396]], '#e81818', 2.500);
smooth([[893,350],[860,346],[825,345],[790,360],[770,378],[768,392],[790,410],[830,428],[880,434],[930,425],[960,405],[967,388],[950,366],[925,354],[893,347]], '#e81818', 2.500);

// channel markers
out += '<path d="M41 118h15l-7.500 8z" fill="#800080"/>';
text(48.500, 124, 'mark-txt', '1');
out += '<path d="M1110 118h15l-7.500 8z" fill="#1030f0"/>';
text(1117.500, 124, 'mark-txt', '2');
out += '<path d="M1122 132l4-6 4 6zM1122 279l4-4 4 4-4 4zM1122 425l4 6 4-6z" fill="#10e010"/>';

chart.innerHTML = out;

// knobs: tick ring, dial and pointer
document.querySelectorAll('.knob').forEach(svg => {
  const cx = 44, cy = 45, r = 17;
  let k = '';
  for (let a = -225; a <= 45; a += 9) {
    const rad = a * Math.PI / 180, c = Math.cos(rad), s = Math.sin(rad);
    const major = (a + 225) % 54 === 0;
    k += `<line x1="${cx + c * (r + 3)}" y1="${cy + s * (r + 3)}" x2="${cx + c * (r + (major ? 11 : 7))}" y2="${cy + s * (r + (major ? 11 : 7))}" stroke="${major ? '#333' : '#bbb'}"/>`;
  }
  k += `<circle cx="${cx}" cy="${cy}" r="${r}" fill="#f4f4f4" stroke="#bbb" stroke-width="3"/>`;
  k += `<path d="M${cx - 12} ${cy + 12}A${r} ${r} 0 0 0 ${cx + 12} ${cy + 12}A${r} ${r} 0 0 0 ${cx + 15} ${cy - 8}" fill="none" stroke="#333" stroke-width="3"/>`;
  k += `<text x="${cx}" y="${cy + 5}" class="knob-val">${svg.dataset.value}</text>`;
  k += `<path d="M0 0l-4-6h8z" fill="#1030e0" transform="translate(${cx} ${cy}) rotate(${svg.dataset.pointer}) translate(0 -12)"/>`;
  svg.insertAdjacentHTML('beforeend', k);
});
```
